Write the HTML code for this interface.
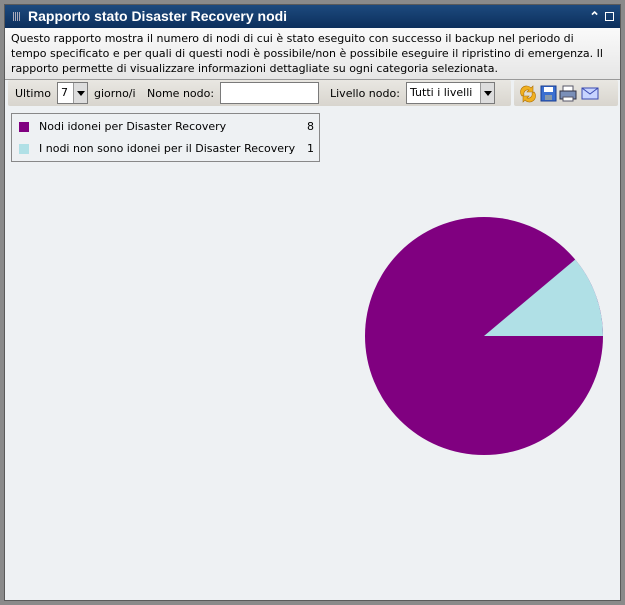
<!DOCTYPE html>
<html><head><meta charset="utf-8"><style>
*{margin:0;padding:0;box-sizing:border-box}
body{width:625px;height:605px;background:#8a8a8a;font-family:"DejaVu Sans",sans-serif;font-size:11px;color:#000;position:relative;overflow:hidden}
.win{position:absolute;left:4px;top:4px;width:617px;height:597px;background:#eef1f3;border:1px solid #5a5a5a}
.title{position:absolute;left:0;top:0;width:615px;height:23px;background:linear-gradient(#1d4a7e,#0c2f5c);color:#fff;font-family:"Liberation Sans",sans-serif;font-weight:bold;font-size:14px;line-height:23px;padding-left:23px}
.grip{position:absolute;left:8px;top:7px;width:7px;height:9px;background:repeating-linear-gradient(90deg,#aab 0 1px,transparent 1px 2px)}
.desc{position:absolute;left:0;top:23px;width:615px;height:52px;background:linear-gradient(#fafafa,#e6e6e6);padding:3px 6px 0;font-size:11px;line-height:15px;border-bottom:1px solid #999;white-space:nowrap}
.tb{position:absolute;top:80px;height:26px;background:linear-gradient(#e9e7e2,#d8d5ce);border-radius:2px}
.sel{position:absolute;background:#fff;border:1px solid #7a7a7a;height:22px;top:82px;font-size:11px;line-height:20px;padding-left:3px}
.arr{position:absolute;right:0;top:0;width:14px;height:20px;background:#ddd;border-left:1px solid #999}
.arr:after{content:"";position:absolute;left:3px;top:8px;border:4px solid transparent;border-top:5px solid #000}
.lbl{position:absolute;top:87px;font-size:11px}
.legend{position:absolute;left:11px;top:113px;width:309px;height:49px;border:1px solid #888;background:#eef1f3}
.sw{position:absolute;width:10px;height:10px;left:7px}
</style></head><body>
<div class="win">
<div class="title"><div class="grip"></div>Rapporto stato Disaster Recovery nodi
<span style="position:absolute;right:20px;top:0;font-size:13px">&#8963;</span>
<span style="position:absolute;right:6px;top:7px;width:9px;height:9px;border:1px solid #fff"></span></div>
<div class="desc">Questo rapporto mostra il numero di nodi di cui è stato eseguito con successo il backup nel periodo di<br>tempo specificato e per quali di questi nodi è possibile/non è possibile eseguire il ripristino di emergenza. Il<br>rapporto permette di visualizzare informazioni dettagliate su ogni categoria selezionata.</div>
</div>
<div class="tb" style="left:8px;width:503px"></div>
<div class="tb" style="left:514px;width:104px"></div>
<span class="lbl" style="left:15px">Ultimo</span>
<div class="sel" style="left:57px;width:31px">7<div class="arr"></div></div>
<span class="lbl" style="left:94px">giorno/i</span>
<span class="lbl" style="left:147px">Nome nodo:</span>
<div class="sel" style="left:220px;width:99px"></div>
<span class="lbl" style="left:330px">Livello nodo:</span>
<div class="sel" style="left:406px;width:89px">Tutti i livelli<div class="arr"></div></div>
<svg style="position:absolute;left:518px;top:84px" width="100" height="20">
<path d="M4 12 a6 6 0 0 1 9-8 l2-2 v6 h-6 l2-2 a4 4 0 0 0-5 5z M16 8 a6 6 0 0 1-9 8 l-2 2 v-6 h6 l-2 2 a4 4 0 0 0 5-5z" fill="#f0b020" stroke="#b07000" stroke-width=".6"/>
<rect x="23" y="2" width="15" height="15" fill="#3b6fd0" stroke="#1a3d90"/><rect x="26" y="3" width="9" height="5" fill="#fff"/><rect x="27" y="11" width="7" height="5" fill="#8899aa"/>
<rect x="45" y="2" width="10" height="6" fill="#fff" stroke="#556"/><rect x="42" y="7" width="16" height="8" fill="#7a8fb8" stroke="#334"/><rect x="45" y="13" width="10" height="4" fill="#fff" stroke="#556"/>
<rect x="64" y="4" width="16" height="11" fill="#c8d4ff" stroke="#3a4ab0"/><path d="M64 4 l8 6 l8-6" fill="none" stroke="#3a4ab0"/>
</svg>
<div class="legend">
<div class="sw" style="top:8px;background:#800080"></div><span style="position:absolute;left:27px;top:6px">Nodi idonei per Disaster Recovery</span><span style="position:absolute;right:5px;top:6px">8</span>
<div class="sw" style="top:30px;background:#b0e0e6"></div><span style="position:absolute;left:27px;top:28px">I nodi non sono idonei per il Disaster Recovery</span><span style="position:absolute;right:5px;top:28px">1</span>
</div>
<svg style="position:absolute;left:0;top:0" width="625" height="605">
<circle cx="484" cy="336" r="119" fill="#800080"/>
<path d="M484 336 L603 336 A119 119 0 0 0 575.2 259.5 Z" fill="#b0e0e6"/>
</svg>
</body></html>
